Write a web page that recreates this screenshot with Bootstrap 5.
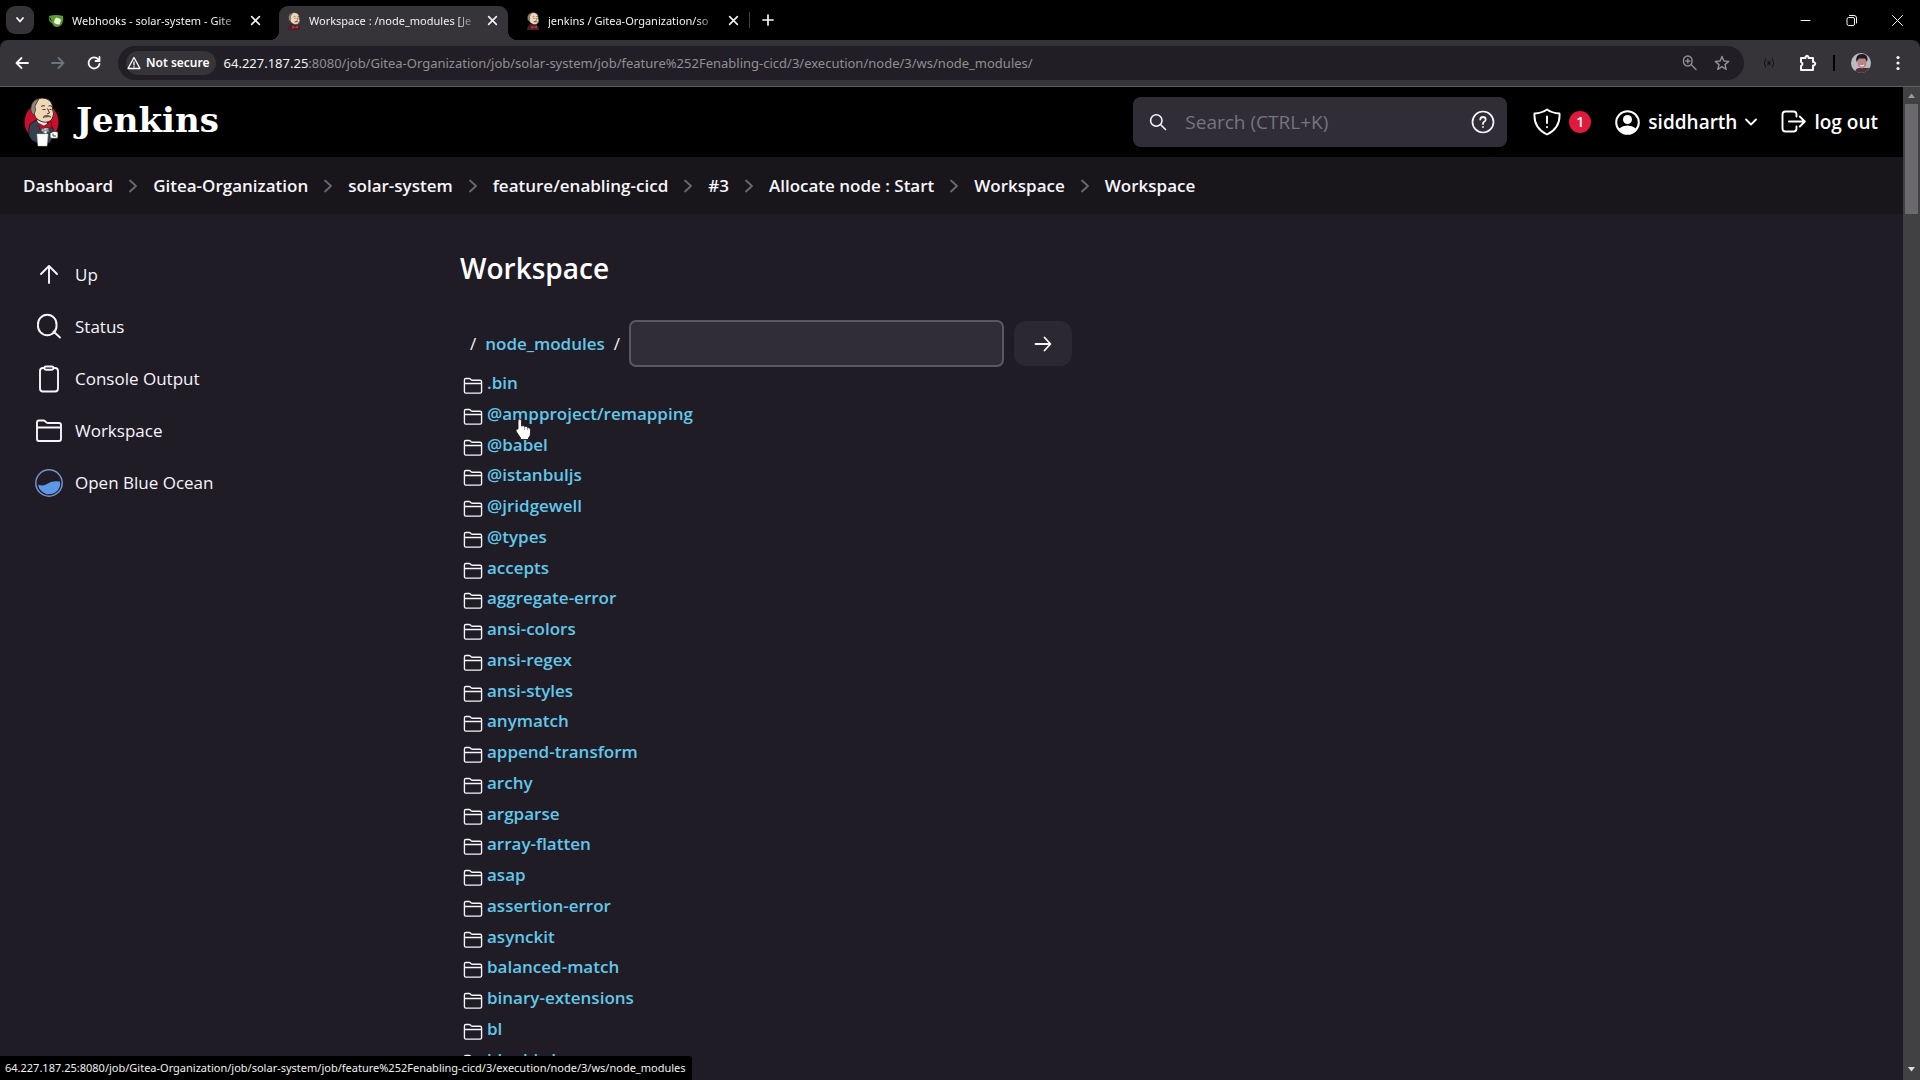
<!DOCTYPE html>
<html lang="en" data-bs-theme="dark">
<head>
<meta charset="utf-8">
<meta name="viewport" content="width=device-width, initial-scale=1">
<title>Workspace : /node_modules [Jenkins]</title>
<link rel="stylesheet" href="https://cdn.jsdelivr.net/npm/bootstrap@5.3.0/dist/css/bootstrap.min.css">
<style>
  :root { --ink: #f7f5fc; --page: #1f1c25; --link: #63c7ea; }
  body { font-family: "Open Sans", "Noto Sans", sans-serif; background: var(--page); color: var(--ink); font-size: 17px; line-height: 24px; }
  a { color: inherit; text-decoration: none; }
  svg { display: block; flex: none; }
  button { color: inherit; background: none; border: 0; padding: 0; }
  .line-art { fill: none; stroke: currentColor; stroke-linecap: round; stroke-linejoin: round; }

  /* browser chrome */
  .tabstrip { height: 40px; background: #000; padding: 6px 0 0 6px; }
  .tab-search { width: 28px; height: 28px; border-radius: 9px; background: #353337; }
  .browser-tab { width: 237px; height: 34px; padding: 0 10px 5px 14px; font-family: "Noto Sans", sans-serif; font-size: 11px; color: #f1f1f2; gap: 8px; }
  .browser-tab.current { width: 229px; background: #363438; border-radius: 9px 9px 0 0; padding-left: 8px; position: relative; }
  .browser-tab.current::before, .browser-tab.current::after { content: ""; position: absolute; bottom: 0; width: 9px; height: 9px; }
  .browser-tab.current::before { left: -9px; background: radial-gradient(circle at 0 0, transparent 9px, #363438 9px); }
  .browser-tab.current::after { right: -9px; background: radial-gradient(circle at 100% 0, transparent 9px, #363438 9px); }
  .tab-title { overflow: hidden; white-space: nowrap; -webkit-mask-image: linear-gradient(90deg, #000 86%, transparent); mask-image: linear-gradient(90deg, #000 86%, transparent); }
  .tab-rule { width: 1px; height: 16px; background: #444; }
  .strip-tools { height: 28px; }
  .window-btns { gap: 35px; padding-right: 17px; }
  .toolbar { height: 47px; background: #363438; border-bottom: 1px solid #5f5d61; border-radius: 8px 8px 0 0; padding: 0 19px 0 14px; }
  .nav-btns { gap: 20px; }
  .strip-back { background: #000; }
  .omnibox { height: 34px; border-radius: 17px; background: #211f25; padding: 0 14px 0 8px; font-family: "Noto Sans", sans-serif; font-size: 13px; color: #918f93; margin: 0 19px 0 16px; }
  .omnibox b { color: #f2f2f3; font-weight: 400; }
  .site-chip { height: 24px; border-radius: 12px; background: #363439; color: #fff; font-size: 12px; font-weight: 600; padding: 0 6px 0 1px; gap: 5px; }
  .tool-rule { width: 2px; height: 16px; }

  /* Jenkins header */
  .masthead { height: 70px; background: #000; padding: 0 25px 0 24px; }
  .wordmark { font: bold 34px/40px "DejaVu Serif", serif; color: #fff; padding-bottom: 4px; }
  .search-box { width: 374px; height: 50px; border-radius: 8px; background: #302d37; padding: 0 12px 0 16px; }
  .search-box input { background: transparent; border: 0; outline: 0; color: var(--ink); font-size: 19px; width: 100%; }
  .search-box input::placeholder { color: #77747c; opacity: 1; }
  .head-text { font-size: 19px; font-weight: 600; color: #fff; }
  .head-links { gap: 24px; margin-left: 26px; }
  .alert-count { width: 22px; height: 22px; border-radius: 50%; background: #df1a3d; font-size: 14px; }
  .crumbs { height: 57px; background: #18161b; padding: 0 23px; font-weight: 600; }
  .crumbs ol { gap: 15px; margin: 0; padding: 0; list-style: none; }
  .crumbs li { gap: 15px; }
  .crumbs svg { color: #6b6870; }

  /* content */
  .side { width: 460px; padding: 35px 0 0 36px; }
  .side a { height: 52px; gap: 12px; }
  .side svg { width: 28px; height: 28px; margin-left: -1px; }
  .heading { font-size: 28px; line-height: 36px; font-weight: 600; margin: 36px 0 34px; }
  .path-form { gap: 9px; padding-left: 10px; height: 47px; }
  .path-link, .files a { color: var(--link); font-weight: 600; }
  .path-input { width: 375px; height: 47px; border: 2px solid #5b5862; border-radius: 7px; background: #302d37; color: var(--ink); padding: 0 12px; }
  .go-btn { width: 58px; height: 45px; border-radius: 12px; background: #2b2831; margin-left: 1px; }
  .files { margin: 0; padding: 0 0 0 3px; list-style: none; }
  .files li { height: 31px; gap: 4px; position: relative; }
  .files li:nth-child(4n) { height: 30px; }
  .files svg.dir { width: 20px; height: 20px; margin-top: 6px; }
  .pointer { position: absolute; left: 52px; top: 20px; z-index: 2; }
  .scrollbar { width: 17px; background: #414043; color: #9b9a9d; padding: 0 2px; }
  .scrollbar i { height: 110px; background: #6b696d; }
  .status-url { position: absolute; left: 0; bottom: 0; height: 24px; background: #000; color: #f0f0f0; font-family: "Noto Sans", sans-serif; font-size: 11px; padding: 0 6px 0 5px; border-radius: 0 3px 0 0; z-index: 3; }
</style>
</head>
<body class="vh-100 d-flex flex-column overflow-hidden position-relative">

<svg width="0" height="0" class="position-absolute" aria-hidden="true">
  <defs>
    <symbol id="folder" viewBox="0 0 28 28"><g class="line-art" stroke-width="1.9"><path d="M2 22V5.500Q2 3.500 4 3.500H8.500Q9.500 3.500 10.300 4.300L11.300 5.300Q12 6 13 6H24Q26 6 26 8V22Q26 24 24 24H4Q2 24 2 22ZM2 10.500H26"/></g></symbol>
    <symbol id="chev" viewBox="0 0 10 14"><path class="line-art" stroke-width="1.800" d="M2 1.500 8 7 2 12.500"/></symbol>
    <symbol id="cross" viewBox="0 0 10 10"><path class="line-art" stroke-width="1.500" d="M1.500 1.500 8.500 8.500M8.500 1.500 1.500 8.500"/></symbol>
    <g id="butler-face">
      <path d="M8 10Q9 2 18 1Q29 1.500 28.500 12Q31 17 28 22Q25 26 19 25Q12 23 10.500 18Q7 15 8 10Z" fill="#f1d6b8" stroke="#2b211b" stroke-width=".9"/>
      <path d="M15 1.500Q8 3 7 10Q6 16 10 18L11.500 13 11 9Z" fill="#8f8780" stroke="#2b211b" stroke-width=".7"/>
      <path d="M17 9.500Q19 8 21 9M24.500 9Q26 8 28 9.500M18.500 12.500H21.500M25.500 12.500H27.500M23.500 11.500 25.500 16 23 17M19 20.500Q22 18 27 20" fill="none" stroke="#33251d" stroke-width=".9"/>
      <path d="M19 19.500Q22 17 26.500 19Q23 21.500 19 19.500Z" fill="#6b5c50"/>
    </g>
    <symbol id="butler" viewBox="0 0 36 50">
      <ellipse cx="17.500" cy="25" rx="17" ry="18.500" fill="#c8102e"/>
      <path d="M6 27Q4 32 5 39Q7 44 13 46L26 46 29 39 29 31 23 25 12 23Z" fill="#34424d" stroke="#111" stroke-width=".8"/>
      <path d="M13 23 17 33 22 37 25 30 22 24Z" fill="#e9e9e9"/>
      <path d="M14 26 20 29 27 24 28 31 21 31 16 33Z" fill="#b4152b" stroke="#400" stroke-width=".5"/>
      <path d="M18 31 21 33 24 31 25 35 21 34 19 36Z" fill="#8f97a0"/>
      <use href="#butler-face"/>
      <path d="M13 37H24L23 49H14Z" fill="#fff" stroke="#bbb" stroke-width=".5"/>
      <path d="M26 36Q30 33 34 35L34 41Q30 42 26 41Z" fill="#fff" stroke="#222" stroke-width=".8"/>
      <path d="M29 36.500V39H32" fill="none" stroke="#222" stroke-width=".8"/>
    </symbol>
    <symbol id="butler-tab" viewBox="4 0 28 36">
      <path d="M6 36Q6 29 12 24L24 25Q30 28 30 36Z" fill="#4a2026"/>
      <path d="M14 27 20 30 26 27V33L20 31 15 34Z" fill="#c03040"/>
      <use href="#butler-face"/>
    </symbol>
  </defs>
</svg>

<div class="tabstrip d-flex align-items-start">
  <button class="tab-search d-flex align-items-center justify-content-center" aria-label="Search tabs"><svg width="10" height="8" viewBox="0 0 10 8"><path class="line-art" stroke-width="1.800" d="M2 2 5 5.500 8 2"/></svg></button>
  <div class="browser-tab d-flex align-items-center">
    <svg width="16" height="14" viewBox="0 0 16 14"><path d="M1 2Q8 0 15 2Q16 6 14 10Q12 13 8 13Q5 12 4 9Q0 8 1 2Z" fill="#5d9a32"/><path d="M2 3.500Q2 6.500 3.800 7" fill="none" stroke="#111"/><rect x="6.500" y="4" width="6" height="6" rx="1.500" fill="#eaf6df" transform="rotate(18 9 7)"/></svg>
    <span class="tab-title flex-grow-1">Webhooks - solar-system - Gite</span>
    <button aria-label="Close tab"><svg width="11" height="11"><use href="#cross"/></svg></button>
  </div>
  <div class="browser-tab current d-flex align-items-center ms-2">
    <svg width="14" height="18"><use href="#butler-tab"/></svg>
    <span class="tab-title flex-grow-1">Workspace : /node_modules [Je</span>
    <button aria-label="Close tab"><svg width="11" height="11"><use href="#cross"/></svg></button>
  </div>
  <div class="browser-tab d-flex align-items-center ms-1">
    <svg width="14" height="18"><use href="#butler-tab"/></svg>
    <span class="tab-title flex-grow-1">jenkins / Gitea-Organization/so</span>
    <button aria-label="Close tab"><svg width="11" height="11"><use href="#cross"/></svg></button>
  </div>
  <div class="strip-tools d-flex align-items-center gap-2">
    <span class="tab-rule"></span>
    <button class="ms-1" aria-label="New tab"><svg width="12" height="12" viewBox="0 0 12 12"><path class="line-art" stroke-width="1.700" d="M6 1V11M1 6H11"/></svg></button>
  </div>
  <div class="strip-tools window-btns ms-auto d-flex align-items-center">
    <button aria-label="Minimize"><svg width="11" height="11" viewBox="0 0 11 11"><path class="line-art" d="M1 5.500H10"/></svg></button>
    <button aria-label="Restore"><svg width="11" height="11" viewBox="0 0 11 11"><path class="line-art" d="M1 4Q1 2.500 2.500 2.500H7Q8.500 2.500 8.500 4V9Q8.500 10.500 7 10.500H2.500Q1 10.500 1 9ZM3.500.5H8Q10.500.5 10.500 3V8"/></svg></button>
    <button aria-label="Close window"><svg width="11" height="11" viewBox="0 0 11 11"><path class="line-art" d="M.5.5 10.500 10.500M10.500.5.5 10.500"/></svg></button>
  </div>
</div>

<div class="strip-back">
<div class="toolbar d-flex align-items-center">
  <div class="nav-btns d-flex align-items-center">
    <button aria-label="Back"><svg width="16" height="16" viewBox="0 0 16 16"><path class="line-art" stroke-width="1.800" d="M14 8H2.500M7.500 3 2.500 8 7.500 13"/></svg></button>
    <button aria-label="Forward" class="text-secondary"><svg width="16" height="16" viewBox="0 0 16 16"><path class="line-art" stroke-width="1.800" d="M2 8H13.500M8.500 3 13.500 8 8.500 13"/></svg></button>
    <button aria-label="Reload"><svg width="16" height="16" viewBox="0 0 16 16"><path class="line-art" stroke-width="1.800" d="M13.500 9A5.500 5.500 0 1 1 12.200 4.300L13.500 6M13.500 2V6H9.500"/></svg></button>
  </div>
  <div class="omnibox d-flex align-items-center flex-grow-1">
    <span class="site-chip d-flex align-items-center me-2"><svg width="14" height="14" viewBox="0 0 14 14"><path class="line-art" stroke-width="1.300" d="M7 1.500 13 12.500H1ZM7 6V9M7 10.700V10.800"/></svg>Not secure</span>
    <span class="flex-grow-1"><b>64.227.187.25</b>:8080/job/Gitea-Organization/job/solar-system/job/feature%252Fenabling-cicd/3/execution/node/3/ws/node_modules/</span>
    <button class="me-3" aria-label="Zoom"><svg width="16" height="16" viewBox="0 0 16 16"><path class="line-art" stroke="#ccc" stroke-width="1.400" d="M10 6A4.300 4.300 0 1 1 1.500 6 4.300 4.300 0 1 1 10 6ZM9 9.500 14 14.500M5.800 4V8M3.800 6H7.800"/></svg></button>
    <button aria-label="Bookmark"><svg width="16" height="16" viewBox="0 0 16 16"><path class="line-art" stroke="#ddd" stroke-width="1.400" d="M8 1.500 9.900 6 14.700 6.400 11 9.600 12.200 14.300 8 11.700 3.800 14.300 5 9.600 1.300 6.400 6.100 6Z"/></svg></button>
  </div>
  <div class="d-flex align-items-center">
    <svg class="line-art text-black opacity-75 me-4" width="12" height="12" viewBox="0 0 14 12"><path d="M3 1Q0 6 3 11M11 1Q14 6 11 11M5 4.500 9 7.500M9 4.500 5 7.500M7 3.500V8.500"/></svg>
    <button aria-label="Extensions"><svg width="18" height="18" viewBox="0 0 18 18"><path class="line-art" stroke-width="2" d="M2 4H6.500V3Q8 .5 9.500 3V4H14V8H15Q17.500 9.500 15 11.500H14V16H2V12Q5 10 2 8Z"/></svg></button>
    <span class="tool-rule bg-black ms-3"></span>
    <svg class="ms-3" width="20" height="20" viewBox="0 0 20 20"><defs><clipPath id="face"><circle cx="10" cy="10" r="10"/></clipPath></defs><g clip-path="url(#face)"><path fill="#bdb8c2" d="M0 0H20V20H0Z"/><path fill="#4a3038" d="M4 20Q4 15 9 15H20V20Z"/><ellipse cx="11" cy="9.500" rx="4.500" ry="6" fill="#b98582"/><path fill="#221820" d="M5.500 9Q4 1 11 1Q18 1 16 9L14 5.500H8Z"/><path stroke="#fff" fill="none" d="M9 12.500Q11 14 13 12"/></g></svg>
    <button class="ms-4" aria-label="Menu"><svg width="6" height="16" viewBox="0 0 6 16" fill="currentColor"><circle cx="3" cy="2.500" r="1.600"/><circle cx="3" cy="8" r="1.600"/><circle cx="3" cy="13.500" r="1.600"/></svg></button>
  </div>
</div>
</div>

<div class="d-flex flex-grow-1 overflow-hidden">
  <div class="flex-grow-1 overflow-hidden">
    <header class="masthead d-flex align-items-center">
      <a href="#" class="d-flex align-items-center gap-3"><svg width="36" height="50"><use href="#butler"/></svg><span class="wordmark">Jenkins</span></a>
      <div class="ms-auto d-flex align-items-center">
        <form class="search-box d-flex align-items-center">
          <svg width="18" height="18" viewBox="0 0 18 18"><path class="line-art" stroke-width="1.600" d="M13 7.500A5.700 5.700 0 1 1 1.600 7.500 5.700 5.700 0 1 1 13 7.500ZM11.500 11.500 16.500 16.500"/></svg>
          <input class="ms-3" type="search" aria-label="Search" placeholder="Search (CTRL+K)">
          <a href="#" aria-label="Help"><svg width="24" height="24" viewBox="0 0 24 24"><circle class="line-art" cx="12" cy="12" r="10.500" stroke-width="1.700" stroke="#ddd"/><path class="line-art" stroke="#ddd" stroke-width="1.800" d="M9.300 9.500Q9.500 7 12 7T14.700 9.500Q14.700 11 12.800 12Q12 12.500 12 14M12 17V17.100"/></svg></a>
        </form>
        <div class="head-links d-flex align-items-center">
        <a href="#" class="d-flex align-items-center gap-2 text-white"><svg width="28" height="28" viewBox="0 0 28 28"><path class="line-art" stroke-width="1.900" d="M14 1.500Q19 5 26.500 5.500 27.500 20 14 26.500.5 20 1.500 5.500 9 5 14 1.500ZM14 8.500V15M14 19V19.200"/></svg><span class="alert-count d-flex align-items-center justify-content-center fw-semibold">1</span></a>
        <a href="#" class="d-flex align-items-center head-text gap-2"><svg width="25" height="25" viewBox="0 0 25 25"><circle class="line-art" cx="12.500" cy="12.500" r="11.300" stroke-width="2"/><circle cx="12.500" cy="9.500" r="4.500" fill="currentColor"/><path fill="currentColor" d="M4 18.500Q8 15.500 12.500 15.500T21 18.500Q18 24 12.500 24T4 18.500Z"/></svg>siddharth<svg width="12" height="8" viewBox="0 0 12 8"><path class="line-art" stroke-width="1.800" d="M1 1.500 6 6.500 11 1.500"/></svg></a>
        <a href="#" class="d-flex align-items-center head-text gap-2"><svg width="25" height="24" viewBox="0 0 25 24"><path class="line-art" stroke-width="1.900" d="M15.500 6.500V4.500Q15.500 1.500 12.500 1.500H4.500Q1.500 1.500 1.500 4.500V18.500Q1.500 21.500 4.500 21.500H12.500Q15.500 21.500 15.500 18.500V16.500M8 11.500H23.500M18.800 6.500 23.800 11.500 18.800 16.500"/></svg>log out</a>
        </div>
      </div>
    </header>

    <nav class="crumbs d-flex align-items-center" aria-label="Breadcrumb">
      <ol class="d-flex align-items-center">
        <li class="d-flex align-items-center"><a href="#">Dashboard</a><svg width="10" height="14"><use href="#chev"/></svg></li>
        <li class="d-flex align-items-center"><a href="#">Gitea-Organization</a><svg width="10" height="14"><use href="#chev"/></svg></li>
        <li class="d-flex align-items-center"><a href="#">solar-system</a><svg width="10" height="14"><use href="#chev"/></svg></li>
        <li class="d-flex align-items-center"><a href="#">feature/enabling-cicd</a><svg width="10" height="14"><use href="#chev"/></svg></li>
        <li class="d-flex align-items-center"><a href="#">#3</a><svg width="10" height="14"><use href="#chev"/></svg></li>
        <li class="d-flex align-items-center"><a href="#">Allocate node : Start</a><svg width="10" height="14"><use href="#chev"/></svg></li>
        <li class="d-flex align-items-center"><a href="#">Workspace</a><svg width="10" height="14"><use href="#chev"/></svg></li>
        <li class="d-flex align-items-center"><a href="#">Workspace</a></li>
      </ol>
    </nav>

    <div class="d-flex">
      <aside class="side flex-shrink-0">
        <a href="#" class="d-flex align-items-center"><svg viewBox="0 0 28 28"><path class="line-art" stroke-width="1.900" d="M14 22V5M6 13 14 5 22 13"/></svg>Up</a>
        <a href="#" class="d-flex align-items-center"><svg viewBox="0 0 28 28"><path class="line-art" stroke-width="1.900" d="M21.500 12A9.300 9.300 0 1 1 3 12 9.300 9.300 0 1 1 21.500 12ZM18.500 18.500 25 24.500"/></svg>Status</a>
        <a href="#" class="d-flex align-items-center"><svg viewBox="0 0 28 28"><path class="line-art" stroke-width="1.900" d="M9.500 3H8Q5 3 5 6V23.500Q5 26.500 8 26.500H20Q23 26.500 23 23.500V6Q23 3 20 3H18.500M11 1.500H17Q18.500 1.500 18.500 3T17 4.700H11Q9.500 4.700 9.500 3T11 1.500Z"/></svg>Console Output</a>
        <a href="#" class="d-flex align-items-center"><svg><use href="#folder"/></svg>Workspace</a>
        <a href="#" class="d-flex align-items-center"><svg viewBox="0 0 28 28"><circle cx="14" cy="14" r="13.200" fill="none" stroke="#7591cc" stroke-width="1.500"/><path fill="#5d97e6" d="M3 15.500Q7 17.500 11 15.500 17 11 25 12.500 26 19 21 23 17 26 11 25 4 22 3 15.500Z"/></svg>Open Blue Ocean</a>
      </aside>

      <main>
        <h1 class="heading">Workspace</h1>
        <form class="path-form d-flex align-items-center">
          <span>/</span><a class="path-link" href="#">node_modules</a><span>/</span>
          <input class="path-input" type="text" aria-label="Path pattern">
          <button class="go-btn d-flex align-items-center justify-content-center" type="button" aria-label="Go"><svg width="18" height="18" viewBox="0 0 18 18"><path class="line-art" stroke-width="1.800" d="M1.500 9H16M10.500 2.500 16.500 9 10.500 15.500"/></svg></button>
        </form>
        <ul class="files" id="files"></ul>
      </main>
    </div>
  </div>
  <div class="scrollbar d-flex flex-column flex-shrink-0 align-items-stretch" aria-hidden="true">
    <svg class="align-self-center" width="13" height="17" viewBox="0 0 13 17"><path fill="currentColor" d="M3 11 6.500 6.500 10 11Z"/></svg>
    <i></i>
    <svg class="align-self-center mt-auto" width="13" height="17" viewBox="0 0 13 17"><path fill="#ddd" d="M3 4 6.500 8.500 10 4Z"/></svg>
  </div>
</div>

<div class="status-url">64.227.187.25:8080/job/Gitea-Organization/job/solar-system/job/feature%252Fenabling-cicd/3/execution/node/3/ws/node_modules</div>

<script src="https://cdn.jsdelivr.net/npm/bootstrap@5.3.0/dist/js/bootstrap.bundle.min.js"></script>
<script>
  const names = [".bin", "@ampproject/remapping", "@babel", "@istanbuljs", "@jridgewell", "@types", "accepts", "aggregate-error", "ansi-colors", "ansi-regex", "ansi-styles", "anymatch", "append-transform", "archy", "argparse", "array-flatten", "asap", "assertion-error", "asynckit", "balanced-match", "binary-extensions", "bl", "bluebird"];
  const hand = '<svg class="pointer" width="17" height="22" viewBox="0 0 17 22"><path d="M4.500 1Q6.500 1 6.500 3V8Q8.500 7 9.500 8.500 11.500 7.500 12.500 9.500 15.500 9 15.500 12V15Q15.500 18 13.500 20V21.500H5.500V20L1.500 14Q0 11 3 11V3Q3 1 4.500 1Z" fill="#fff" stroke="#111" stroke-width=".8"/><path d="M9.500 9V12M12.500 10V12" stroke="#777" stroke-width=".7"/></svg>';
  document.getElementById("files").innerHTML = names.map((n, i) =>
    `<li class="d-flex align-items-center"><svg class="dir"><use href="#folder"/></svg><a href="#">${n}</a>${i === 1 ? hand : ""}</li>`).join("");
</script>
</body>
</html>
